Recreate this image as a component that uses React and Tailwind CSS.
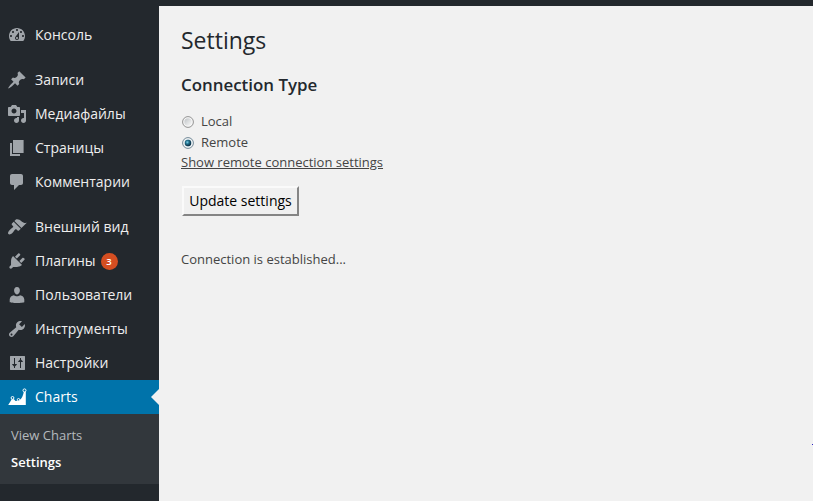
const ICONS = {
  dashboard:
    "M3.76 16h12.48c1.1-1.37 1.76-3.11 1.76-5 0-4.42-3.58-8-8-8s-8 3.58-8 8c0 1.89.66 3.63 1.76 5zM10 4c.55 0 1 .45 1 1s-.45 1-1 1-1-.45-1-1 .45-1 1-1zM6 6c.55 0 1 .45 1 1s-.45 1-1 1-1-.45-1-1 .45-1 1-1zm8 0c.55 0 1 .45 1 1s-.45 1-1 1-1-.45-1-1 .45-1 1-1zm-5.37 5.55L12 7v6c0 1.1-.9 2-2 2s-2-.9-2-2c0-.57.24-1.08.63-1.45zM4 10c.55 0 1 .45 1 1s-.45 1-1 1-1-.45-1-1 .45-1 1-1zm12 0c.55 0 1 .45 1 1s-.45 1-1 1-1-.45-1-1 .45-1 1-1zm-5 3c0-.55-.45-1-1-1s-1 .45-1 1 .45 1 1 1 1-.45 1-1z",
  post: "M10.44 3.02l1.82-1.82 6.36 6.35-1.83 1.82c-1.05-.68-2.48-.57-3.41.36l-.75.75c-.92.93-1.04 2.35-.35 3.41l-1.83 1.82-2.41-2.41-2.8 2.79c-.42.42-3.38 2.71-3.8 2.29s1.86-3.39 2.28-3.81l2.79-2.79L4.1 9.36l1.83-1.82c1.05.69 2.48.57 3.4-.36l.75-.75c.93-.92 1.05-2.35.36-3.41z",
  media:
    "M13 11V4c0-.55-.45-1-1-1h-1.67L9 1H5L3.67 3H2c-.55 0-1 .45-1 1v7c0 .55.45 1 1 1h10c.55 0 1-.45 1-1zM7 4.5c1.38 0 2.5 1.12 2.5 2.5S8.38 9.5 7 9.5 4.5 8.38 4.5 7 5.62 4.5 7 4.5zM14 6h5v10.5c0 1.38-1.12 2.5-2.5 2.5S14 17.88 14 16.5s1.12-2.5 2.5-2.5c.17 0 .34.02.5.05V9h-3V6zm-4 8.05V13h2v3.5c0 1.38-1.12 2.5-2.5 2.5S7 17.88 7 16.5 8.12 14 9.5 14c.17 0 .34.02.5.05z",
  page: "M6 15V2h10.6v13H6zm-1 1h8v2H3V5h2v11z",
  comments:
    "M5 2h9c1.1 0 2 .9 2 2v7c0 1.1-.9 2-2 2h-2l-5 5v-5H5c-1.1 0-2-.9-2-2V4c0-1.1.9-2 2-2z",
  appearance:
    "M14.48 11.06L7.41 3.99l1.5-1.5c.5-.56 2.3-.47 3.51.32 1.21.8 1.43 1.28 2.91 2.1 1.18.64 2.45 1.26 4.45.85zm-.71.71L6.7 4.7 4.93 6.47c-.39.39-.39 1.02 0 1.41l1.06 1.06c.39.39.39 1.03 0 1.42-.6.6-1.43 1.11-2.21 1.69-.35.26-.7.53-1.01.84C1.43 14.23.4 16.08 1.4 17.07c.99 1 2.84-.03 4.18-1.36.31-.31.58-.66.85-1.02.57-.78 1.08-1.61 1.69-2.21.39-.39 1.02-.39 1.41 0l1.06 1.06c.39.39 1.02.39 1.41 0z",
  plugins:
    "M13.11 4.36L9.87 7.6 8 5.73l3.24-3.24c.35-.34 1.05-.2 1.56.32.52.51.66 1.21.31 1.55zm-8 1.77l.91-1.12 9.01 9.01-1.19.84c-.71.71-2.63 1.16-3.82 1.16H6.14L4.9 17.26c-.59.59-1.54.59-2.12 0-.59-.58-.59-1.53 0-2.12l1.24-1.24v-3.88c0-1.13.4-3.19 1.09-3.89zm7.26 3.97l3.24-3.24c.34-.35 1.04-.21 1.55.31.52.51.66 1.21.31 1.55l-3.24 3.25z",
  users:
    "M10 9.4c-2.27 0-2.9-3.3-2.9-3.6C6.9 3.9 7.82 2 9.97 2c2.16 0 3.1 1.9 2.9 3.8 0 .3-.6 3.6-2.87 3.6zM7 10.3c1.4 1.4 4.6 1.4 6 0 2.3.1 4.3 2 4.3 4.2V17.3s-3.6.8-7.3.8-7.3-.8-7.3-.8v-2.8c0-2.2 2-4.1 4.3-4.2z",
  tools:
    "M16.68 9.77c-1.34 1.34-3.3 1.67-4.95.99l-5.41 6.52c-.99.99-2.59.99-3.58 0s-.99-2.59 0-3.57l6.52-5.42c-.68-1.65-.35-3.61.99-4.95 1.28-1.28 3.12-1.62 4.72-1.06l-2.89 2.89 2.82 2.82 2.86-2.87c.53 1.58.18 3.39-1.08 4.65zM3.81 16.21c.4.39 1.04.39 1.43 0 .4-.4.4-1.04 0-1.43-.39-.4-1.03-.4-1.43 0-.39.39-.39 1.03 0 1.43z",
  settings:
    "M18 16.5V3.5c0-.3-.2-.5-.5-.5H3.5c-.3 0-.5.2-.5.5v13c0 .3.2.5.5.5h14c.3 0 .5-.2.5-.5zM8 11h1.4c.5 0 .6.5.3.8L8 13.6V15H7v-1.4L5.300 11.800c-.3-.3-.2-.8.3-.8H7V5h1zM13 9h-1.400c-.5 0-.6-.5-.3-.8L13 6.400V5h1v1.400l1.700 1.800c.3.300.2.800-.3.800H14v6h-1z",
};

const GROUPS = [
  [{ icon: "dashboard", label: "Консоль" }],
  [
    { icon: "post", label: "Записи" },
    { icon: "media", label: "Медиафайлы" },
    { icon: "page", label: "Страницы" },
    { icon: "comments", label: "Комментарии" },
  ],
  [
    { icon: "appearance", label: "Внешний вид" },
    { icon: "plugins", label: "Плагины", badge: 3 },
    { icon: "users", label: "Пользователи" },
    { icon: "tools", label: "Инструменты" },
    { icon: "settings", label: "Настройки" },
  ],
];

function MenuItem({ icon, label, badge }) {
  return (
    <li className="flex h-[34px] items-center pl-[7px] text-[14px] leading-[18px] text-[#eeeeee]">
      <svg viewBox="0 0 20 20" className="mr-2 size-5 shrink-0 fill-[#a0a5aa]" fillRule="evenodd">
        <path d={ICONS[icon]} />
      </svg>
      <span>{label}</span>
      {badge && (
        <span className="ml-[5px] flex size-[17px] items-center justify-center rounded-full bg-[#d54e21] text-[9.5px] leading-[17px] font-semibold text-white">
          {badge}
        </span>
      )}
    </li>
  );
}

function ChartIcon() {
  return (
    <svg viewBox="0 0 20 20" className="mr-2 size-5 shrink-0">
      <path d="M1.2 18L5.2 11.5L7.200 12.5L8.500 14L11.500 13.500C14 12.500 16 10 16.800 4.500L18.800 3.500V18Z" fill="#fff" />
      <g fill="#0073aa" stroke="#fff" strokeWidth="1">
        <circle cx="5.5" cy="10.9" r="1.4" />
        <circle cx="11.5" cy="12.7" r="1.2" />
        <circle cx="17.5" cy="3.4" r="1.5" />
      </g>
    </svg>
  );
}

function Radio({ checked }) {
  return (
    <svg viewBox="0 0 12 12" className="size-3 shrink-0">
      <defs>
        <linearGradient id="radioFace" x1="0" y1="0" x2="1" y2="1">
          <stop offset="0" stopColor="#bfc3c6" />
          <stop offset="1" stopColor="#fafafa" />
        </linearGradient>
        <radialGradient id="radioDot" cx=".4" cy=".38" r=".6">
          <stop offset="0" stopColor="#7fd0e8" />
          <stop offset=".45" stopColor="#23738f" />
          <stop offset="1" stopColor="#0b2c42" />
        </radialGradient>
      </defs>
      <circle cx="6" cy="6" r="5.4" fill="#f7f7f7" stroke={checked ? "#6f8796" : "#929292"} strokeWidth="1" />
      <circle cx="6" cy="6" r="3.7" fill={checked ? "#c5dce6" : "url(#radioFace)"} />
      {checked && <circle cx="6" cy="6" r="3.2" fill="url(#radioDot)" />}
    </svg>
  );
}

export default function App() {
  return (
    <div className="flex h-[501px] w-[813px] flex-col overflow-hidden bg-[#f1f1f1] font-['Open_Sans',sans-serif]">
      <header className="h-1.5 shrink-0 bg-[#23282d]" />
      <div className="flex min-h-0 flex-1">
        <nav className="w-[159px] shrink-0 bg-[#23282d] pt-3">
          <div className="flex flex-col gap-[11px]">
            {GROUPS.map((items, i) => (
              <ul key={i}>
                {items.map((item) => (
                  <MenuItem key={item.label} {...item} />
                ))}
              </ul>
            ))}
          </div>
          <div className="relative flex h-[34px] items-center bg-[#0073aa] pl-[7px] text-[14px] leading-[18px] text-white">
            <ChartIcon />
            <span>Charts</span>
            <span className="absolute top-[9px] right-0 size-0 border-y-8 border-r-8 border-y-transparent border-r-[#f1f1f1]" />
          </div>
          <ul className="h-[70px] bg-[#32373c] pt-2 pl-[11px] text-[13px] leading-[27px]">
            <li className="text-[#b4b9be]">View Charts</li>
            <li className="font-semibold text-white">Settings</li>
          </ul>
        </nav>
        <main className="relative flex-1 pl-[22px] text-[13px] text-[#444444]">
          <h1 className="pt-5 text-[23px] leading-[29px] text-[#23282d]">Settings</h1>
          <h2 className="mt-[18px] text-[16.9px] leading-6 font-semibold text-[#23282d]">Connection Type</h2>
          <div className="mt-[14px] flex h-[21px] items-center gap-[7px] pl-px">
            <Radio />
            <span>Local</span>
          </div>
          <div className="flex h-[21px] items-center gap-[7px] pl-px">
            <Radio checked />
            <span>Remote</span>
          </div>
          <a className="block h-5 leading-[19px] underline">Show remote connection settings</a>
          <button className="mt-[13px] ml-px block h-[30px] w-[117px] border-2 border-t-[#fafafa] border-r-[#858585] border-b-[#858585] border-l-[#fafafa] bg-[#f0f0f0] text-[14px] leading-[26px] whitespace-nowrap text-black">
            Update settings
          </button>
          <p className="mt-[34px] leading-[19px]">Connection is established...</p>
          <span className="absolute top-[438px] right-0 size-px bg-[#2b22c4]" />
        </main>
      </div>
    </div>
  );
}
